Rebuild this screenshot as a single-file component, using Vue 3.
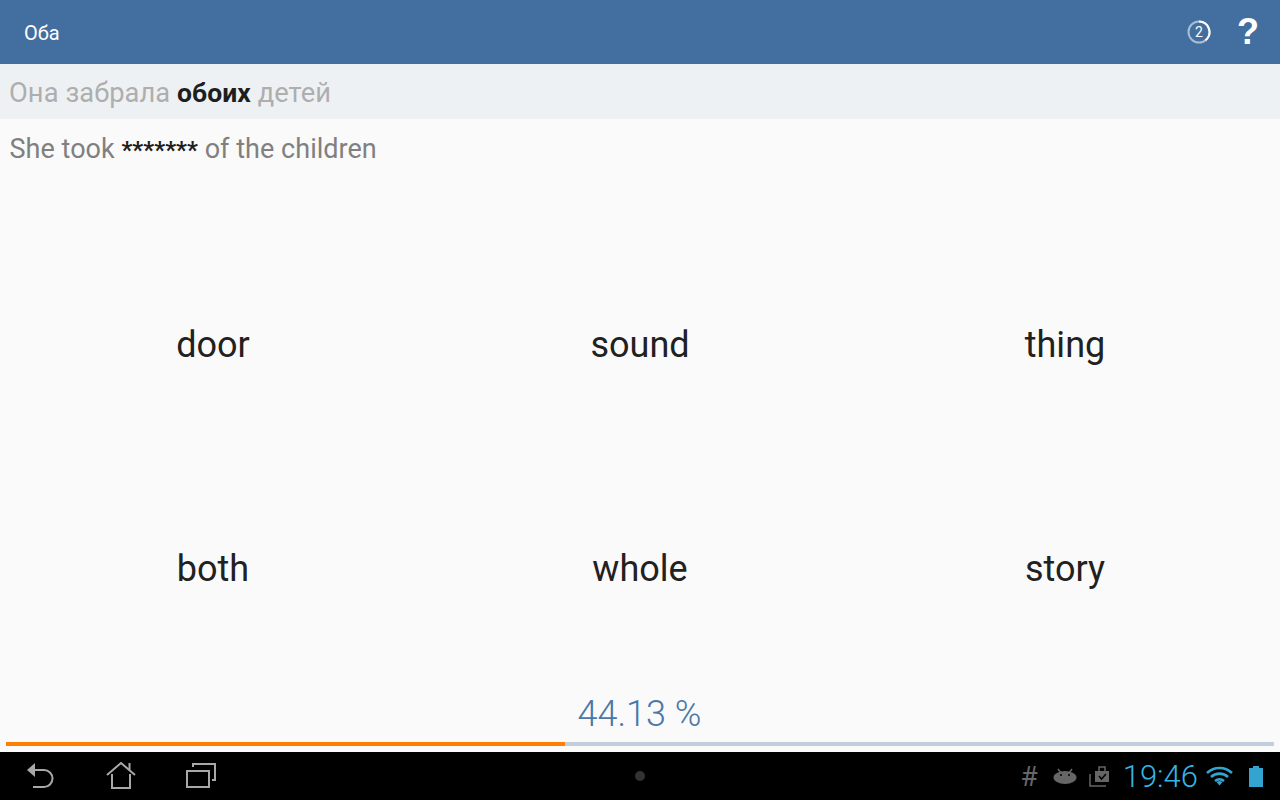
<template>
  <div class="screen">
    <header class="action-bar">
      <span class="title">Оба</span>
      <div class="actions">
        <svg class="timer" width="26" height="26" viewBox="0 0 26 26">
          <circle cx="13" cy="13" r="10.5" fill="none" stroke="#a9bdd4" stroke-width="2" />
          <path d="M13 2.5 A10.5 10.5 0 0 1 19.5 21.2" fill="none" stroke="#fff" stroke-width="2" />
          <text x="13" y="18" text-anchor="middle" class="timer-text">2</text>
        </svg>
        <span class="help">?</span>
      </div>
    </header>

    <div class="sentence">Она забрала <b>обоих</b> детей</div>
    <div class="translation">She took <span class="stars">*******</span> of the children</div>

    <main class="choices">
      <div v-for="word in words" :key="word" class="choice">{{ word }}</div>
    </main>

    <div class="percent">{{ progress }} %</div>
    <div class="progress">
      <div class="progress-fill" :style="{ width: fillWidth + 'px' }"></div>
    </div>

    <footer class="nav-bar">
      <div class="nav-left">
        <svg width="30" height="28" viewBox="0 0 30 28" fill="none" stroke="#a8a8a8" stroke-width="2">
          <path d="M7 8 H18 A8.5 8.5 0 0 1 18 25 H7" />
          <path d="M1 8 L9 1 V15 Z" fill="#a8a8a8" stroke="none" />
        </svg>
        <svg width="30" height="28" viewBox="0 0 30 28" fill="none" stroke="#a8a8a8" stroke-width="2">
          <path d="M1 13 L15 1 L29 13" />
          <path d="M6 12 V26 H24 V12" />
          <path d="M23.5 1 V8" />
        </svg>
        <svg width="30" height="26" viewBox="0 0 30 26" fill="none" stroke="#a8a8a8" stroke-width="2">
          <rect x="1" y="8" width="22" height="16" />
          <path d="M7 4 V1 H29 V17 H26" />
        </svg>
      </div>
      <span class="nav-dot"></span>
      <div class="status">
        <span class="hash">#</span>
        <svg class="android" width="24" height="16" viewBox="0 0 24 16" fill="#666">
          <ellipse cx="12" cy="9.5" rx="11.5" ry="6.5" />
          <path d="M5 1 L8 5 M19 1 L16 5" stroke="#666" stroke-width="1.5" />
          <circle cx="8" cy="7" r="1" fill="#000" />
          <circle cx="16" cy="7" r="1" fill="#000" />
        </svg>
        <svg class="bag" width="22" height="22" viewBox="0 0 22 22" fill="none">
          <path d="M6 6 H20 V17 H6 Z" fill="#666" />
          <path d="M10 6 V2 H16 V6" stroke="#666" stroke-width="1.5" />
          <path d="M1 9 V21 H17" stroke="#666" stroke-width="1.5" />
          <path d="M10 11 L12.5 14 L17 9" stroke="#000" stroke-width="1.5" />
        </svg>
        <span class="clock">19:46</span>
        <svg class="wifi" width="27" height="20" viewBox="0 0 27 20" fill="none" stroke="#33a3cf" stroke-width="2.6">
          <path d="M1 7 A18 18 0 0 1 26 7" />
          <path d="M5 11 A12.5 12.5 0 0 1 22 11" />
          <path d="M9 15 A7 7 0 0 1 18 15" />
          <path d="M10.5 16 L13.5 19.5 L16.5 16 A5 5 0 0 0 10.5 16 Z" fill="#33a3cf" stroke="none" />
        </svg>
        <svg class="battery" width="14" height="21" viewBox="0 0 14 21" fill="#33a3cf">
          <rect x="4" y="0" width="6" height="2" />
          <rect x="0" y="2" width="14" height="19" />
        </svg>
      </div>
    </footer>
  </div>
</template>

<script setup>
const words = ['door', 'sound', 'thing', 'both', 'whole', 'story']
const progress = 44.13
// la piste fait 1268px de large
const fillWidth = Math.floor(1268 * progress / 100)
</script>

<style>
html, body {
  margin: 0;
  background: #fafafa;
}
</style>

<style scoped>
.screen {
  width: 1280px;
  height: 800px;
  display: flex;
  flex-direction: column;
  overflow: hidden;
  background: #fafafa;
  font-family: Roboto, "Liberation Sans", sans-serif;
}

.action-bar {
  height: 64px;
  flex: none;
  display: flex;
  align-items: center;
  justify-content: space-between;
  padding: 0 21px 0 24px;
  background: #426fa0;
  color: #fff;
}

.title {
  font-size: 20px;
  padding-top: 2px;
}

.actions {
  display: flex;
  align-items: center;
  gap: 25px;
}

.timer-text {
  font-size: 14px;
  fill: #fff;
}

.help {
  font-size: 36px;
  font-weight: 700;
  font-family: "Liberation Sans", sans-serif;
  line-height: 1;
}

.sentence {
  height: 55px;
  flex: none;
  box-sizing: border-box;
  padding: 0 9px;
  background: #edf1f4;
  color: #aeaeae;
  font-size: 27.3px;
  letter-spacing: 0.06px;
  line-height: 57px;
}

.sentence b {
  color: #1e1e1e;
  font-size: 26.5px;
}

.translation {
  height: 58px;
  flex: none;
  box-sizing: border-box;
  padding: 0 9.5px;
  color: #808080;
  font-size: 27px;
  letter-spacing: 0.03px;
  line-height: 60px;
}

.stars {
  color: #1e1e1e;
  font-size: 24px;
  font-weight: 700;
}

.choices {
  display: grid;
  grid-template-columns: 426px 428px 422px;
  grid-template-rows: 224px 224px;
  flex: none;
  padding-top: 56px;
}

.choice {
  display: flex;
  align-items: center;
  justify-content: center;
  font-size: 36px;
  color: #212121;
}

.percent {
  height: 61px;
  flex: none;
  padding-right: 1px;
  text-align: center;
  font-size: 36px;
  font-weight: 300;
  line-height: 67px;
  color: #4a76a8;
}

.progress {
  height: 4px;
  flex: none;
  margin: 0 6px 6px;
  background: #c0cede;
}

.progress-fill {
  height: 100%;
  background: #ff7f00;
}

.nav-bar {
  height: 48px;
  flex: none;
  position: relative;
  display: flex;
  align-items: center;
  justify-content: space-between;
  background: #000;
}

.nav-left {
  display: flex;
  align-items: center;
  gap: 50px;
  padding-left: 26px;
}

.nav-dot {
  position: absolute;
  left: 635px;
  top: 19px;
  width: 10px;
  height: 10px;
  border-radius: 50%;
  background: #333;
}

.status {
  display: flex;
  align-items: center;
  padding-right: 17px;
}

.hash {
  font-size: 28px;
  font-weight: 400;
  color: #666;
}

.android {
  margin-left: 15px;
}

.bag {
  margin-left: 12px;
}

.clock {
  margin-left: 12px;
  font-size: 31px;
  color: #33b5e5;
  font-weight: 300;
}

.wifi {
  margin-left: 8px;
}

.battery {
  margin-left: 16px;
}
</style>
